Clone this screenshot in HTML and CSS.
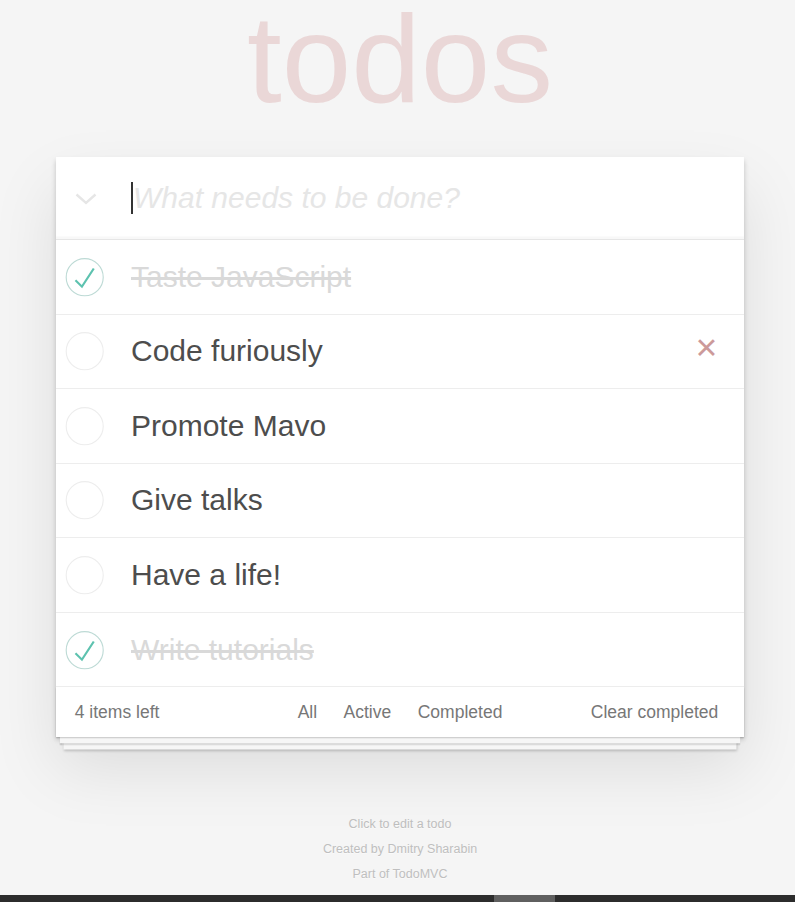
FILE: index.html
```html
<!DOCTYPE html>
<html lang="en">
<head>
<meta charset="utf-8">
<title>Mavo • TodoMVC</title>
<link rel="stylesheet" href="styles.css">
</head>
<body>
<div class="page">
  <header class="header">
    <h1 class="title">todos</h1>
  </header>
  <section class="todoapp">
    <div class="new-todo">
      <svg class="toggle-all" width="22" height="12" viewBox="0 0 22 12"><polyline points="1.5,1.5 11,10 20.5,1.5" fill="none" stroke="#e6e6e6" stroke-width="2.4"/></svg>
      <span class="caret"></span>
      <span class="placeholder">What needs to be done?</span>
    </div>
    <ul class="todo-list">
      <li class="todo completed">
        <svg class="toggle" width="50" height="50" viewBox="-10 -18 100 135"><circle cx="50" cy="50" r="50" fill="none" stroke="#bddad5" stroke-width="3"/><path fill="#5dc2af" d="M72 25L42 71 27 56l-4 4 20 20 34-52z"/></svg>
        <span class="label">Taste JavaScript</span>
      </li>
      <li class="todo">
        <svg class="toggle" width="50" height="50" viewBox="-10 -18 100 135"><circle cx="50" cy="50" r="50" fill="none" stroke="#ededed" stroke-width="3"/></svg>
        <span class="label">Code furiously</span>
        <span class="destroy">×</span>
      </li>
      <li class="todo">
        <svg class="toggle" width="50" height="50" viewBox="-10 -18 100 135"><circle cx="50" cy="50" r="50" fill="none" stroke="#ededed" stroke-width="3"/></svg>
        <span class="label">Promote Mavo</span>
      </li>
      <li class="todo">
        <svg class="toggle" width="50" height="50" viewBox="-10 -18 100 135"><circle cx="50" cy="50" r="50" fill="none" stroke="#ededed" stroke-width="3"/></svg>
        <span class="label">Give talks</span>
      </li>
      <li class="todo">
        <svg class="toggle" width="50" height="50" viewBox="-10 -18 100 135"><circle cx="50" cy="50" r="50" fill="none" stroke="#ededed" stroke-width="3"/></svg>
        <span class="label">Have a life!</span>
      </li>
      <li class="todo completed">
        <svg class="toggle" width="50" height="50" viewBox="-10 -18 100 135"><circle cx="50" cy="50" r="50" fill="none" stroke="#bddad5" stroke-width="3"/><path fill="#5dc2af" d="M72 25L42 71 27 56l-4 4 20 20 34-52z"/></svg>
        <span class="label">Write tutorials</span>
      </li>
    </ul>
    <footer class="footer">
      <span class="todo-count">4 items left</span>
      <ul class="filters">
        <li><a class="filter">All</a></li>
        <li><a class="filter">Active</a></li>
        <li><a class="filter">Completed</a></li>
      </ul>
      <span class="clear-completed">Clear completed</span>
    </footer>
  </section>
  <footer class="info">
    <p>Click to edit a todo</p>
    <p>Created by Dmitry Sharabin</p>
    <p>Part of TodoMVC</p>
  </footer>
</div>
<div class="hscroll"><div class="hscroll-thumb"></div></div>
</body>
</html>
```

FILE: styles.css
```css
html, body {
  margin: 0;
  padding: 0;
}
body {
  background: #f5f5f5;
  color: #4d4d4d;
  font-family: "Liberation Sans", Arial, sans-serif;
  font-size: 17.5px;
  line-height: 24.5px;
  overflow: hidden;
  height: 902px;
}
.page {
  margin-left: 56px;
  width: 688px;
}
.header {
  height: 157px;
}
.title {
  margin: 0;
  padding-top: 0;
  font-size: 125px;
  line-height: 118.5px;
  font-weight: normal;
  text-align: center;
  color: rgba(175, 47, 47, 0.15);
}
.todoapp {
  position: relative;
  background: #fff;
  box-shadow: 0 2.5px 5px 0 rgba(0, 0, 0, 0.2), 0 31.25px 62.5px 0 rgba(0, 0, 0, 0.1);
}
.new-todo {
  height: 82px;
  display: flex;
  align-items: center;
  padding-left: 19px;
  box-shadow: inset 0 -2.5px 1.25px rgba(0, 0, 0, 0.03);
  font-size: 30px;
  line-height: 42px;
}
.toggle-all {
  flex: none;
  margin-top: 2px;
  margin-right: 34px;
}
.caret {
  width: 2px;
  height: 32px;
  background: #333;
  flex: none;
}
.placeholder {
  font-style: italic;
  color: #e6e6e6;
}
.todo-list {
  list-style: none;
  margin: 0;
  padding: 0;
  border-top: 1px solid #e6e6e6;
}
.todo {
  display: flex;
  align-items: center;
  height: 73.55px;
  border-bottom: 1px solid #ededed;
  font-size: 30px;
  line-height: 36px;
}
.toggle {
  flex: none;
}
.label {
  padding-left: 25px;
  flex: 1;
}
.todo.completed .label {
  color: #d9d9d9;
  text-decoration: line-through;
}
.destroy {
  flex: none;
  width: 50px;
  height: 50px;
  margin-right: 12.5px;
  margin-bottom: 8px;
  font-size: 37.5px;
  line-height: 50px;
  text-align: center;
  color: #cc9a9a;
}
.footer {
  position: relative;
  height: 50px;
  display: grid;
  grid-template-columns: 1fr auto 1fr;
  align-items: center;
  padding: 0 18.75px;
  color: #777;
}
.footer::before {
  content: "";
  position: absolute;
  left: 0;
  right: 0;
  bottom: 0;
  height: 50px;
  box-shadow: 0 1.25px 1.25px rgba(0, 0, 0, 0.2), 0 10px 0 -3.75px #f6f6f6, 0 11.25px 1.25px -3.75px rgba(0, 0, 0, 0.2), 0 20px 0 -7.5px #f6f6f6, 0 21.25px 2.5px -7.5px rgba(0, 0, 0, 0.2);
  pointer-events: none;
}
.todo-count {
  justify-self: start;
}
.filters {
  list-style: none;
  margin: 0;
  padding: 0;
  display: flex;
  gap: 26.5px;
}
.filter {
  color: inherit;
  text-decoration: none;
}
.clear-completed {
  justify-self: end;
  margin-right: 7px;
}
.info {
  margin-top: 81px;
  display: flex;
  flex-direction: column;
  gap: 12.5px;
  color: #bfbfbf;
  font-size: 12.5px;
  line-height: 12.5px;
  text-align: center;
  text-shadow: 0 1px 0 rgba(255, 255, 255, 0.5);
}
.info p {
  margin: 0;
}
.hscroll {
  position: fixed;
  left: 0;
  right: 0;
  bottom: 0;
  height: 7px;
  background: #2c2c2c;
  display: flex;
}
.hscroll-thumb {
  margin-left: 494px;
  width: 61px;
  background: #5f5f5f;
}
```
